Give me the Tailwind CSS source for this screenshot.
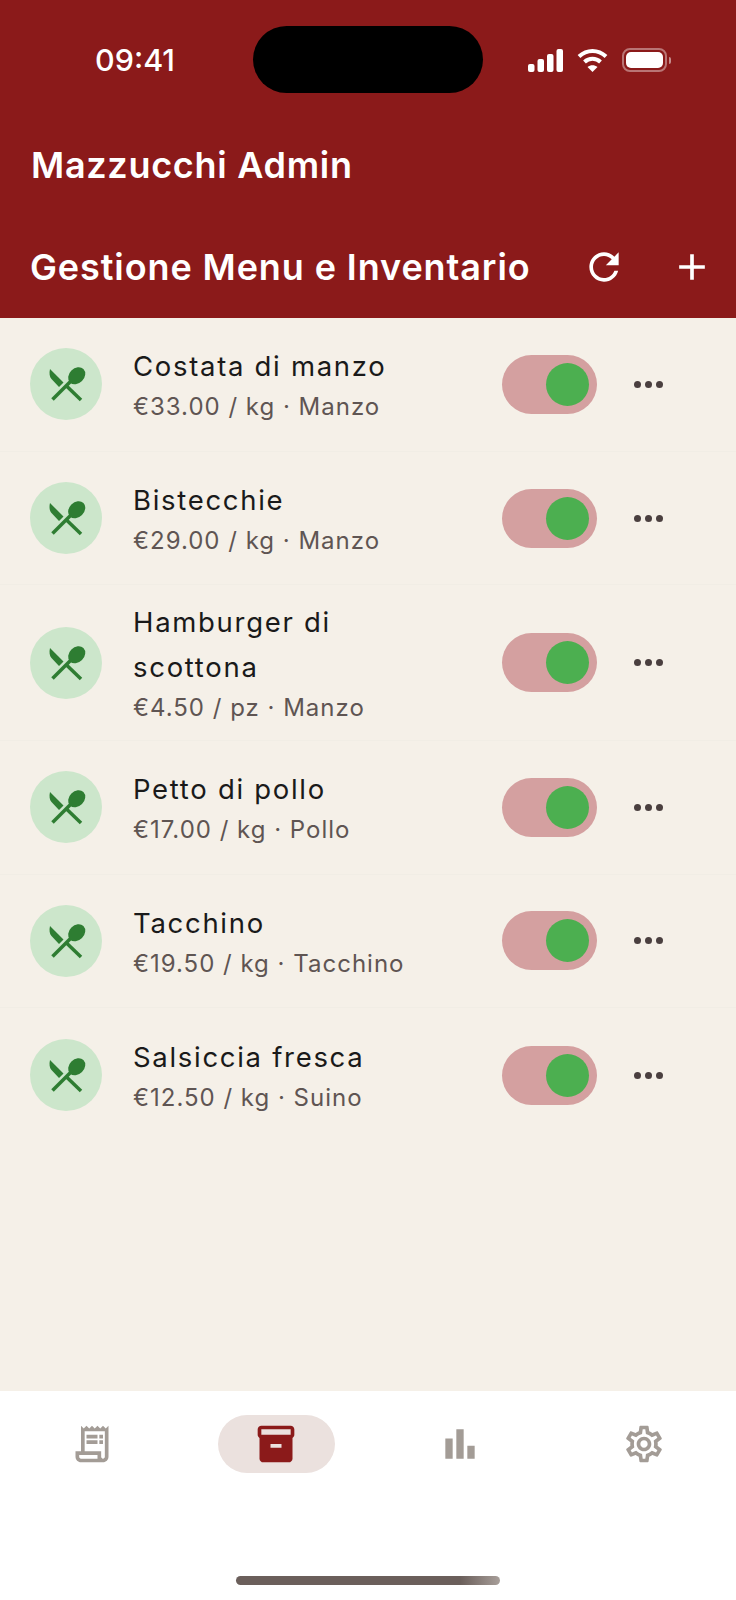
<!DOCTYPE html>
<html lang="it">
<head>
<meta charset="utf-8">
<title>Mazzucchi Admin</title>
<script src="https://cdn.jsdelivr.net/npm/@tailwindcss/browser@4"></script>
</head>
<body class="m-0">
<div class="relative flex h-[1600px] w-[736px] flex-col overflow-hidden bg-[#f5f0e8] font-['Inter',sans-serif]">
  <header class="h-[318px] shrink-0 bg-[#8b1a1a] font-['Inter',sans-serif] text-white">
    <div class="flex h-[120px] items-center justify-between pl-[95px] pr-[65px]">
      <span class="text-[30.500px] font-medium leading-none">09:41</span>
      <div class="flex items-center gap-[14px]">
        <svg width="35" height="23" viewBox="0 0 35 23" fill="#fff"><rect x="0" y="15" width="6.500" height="8" rx="2"/><rect x="9.500" y="10" width="6.500" height="13" rx="2"/><rect x="19" y="5" width="6.500" height="18" rx="2"/><rect x="28.500" y="0" width="6.500" height="23" rx="2"/></svg>
        <svg width="31" height="24" viewBox="0 0 31 24" fill="none" stroke="#fff" stroke-width="4"><path d="M2 8.500C10 1 21 1 29 8.500"/><path d="M7.500 14C12 9.800 19 9.800 23.500 14"/><path d="M15.500 24l-5-5c3-2.400 7-2.400 10 0z" fill="#fff" stroke="none"/></svg>
        <div class="flex items-center gap-[2px]">
          <div class="h-[24px] w-[45px] rounded-[8px] border-2 border-white/40 p-[2px]"><div class="h-full w-full rounded-[5px] bg-white"></div></div>
          <div class="h-[7px] w-[2px] rounded-r bg-white/50"></div>
        </div>
      </div>
    </div>
    <div class="flex h-[90px] items-center pl-[31px] text-[36px] font-semibold leading-none tracking-[0.700px]">Mazzucchi Admin</div>
    <div class="flex h-[108px] items-center justify-between pl-[30px] pr-[22px] pt-[6px]">
      <h1 class="text-[36px] font-semibold leading-none tracking-[0.900px]">Gestione Menu e Inventario</h1>
      <div class="flex items-center gap-[44px]">
        <svg width="44" height="44" viewBox="0 0 24 24" fill="#fff"><path d="M17.650 6.350C16.200 4.900 14.210 4 12 4c-4.420 0-7.990 3.580-7.990 8s3.570 8 7.990 8c3.730 0 6.840-2.550 7.730-6h-2.080c-.82 2.330-3.040 4-5.650 4-3.310 0-6-2.690-6-6s2.690-6 6-6c1.660 0 3.140.69 4.220 1.780L13 11h7V4l-2.350 2.350z"/></svg>
        <svg width="44" height="44" viewBox="0 0 24 24" fill="#fff"><path d="M19 13h-6v6h-2v-6H5v-2h6V5h2v6h6v2z"/></svg>
      </div>
    </div>
  </header>

  <main class="flex-1">
    <div class="flex min-h-[133.700px] items-center border-b border-[#f1ede5] pl-[30px] pr-[73.500px]">
      <div class="flex h-[72px] w-[72px] shrink-0 items-center justify-center rounded-full bg-[#cce6cb]">
        <svg width="72" height="72" viewBox="0 0 72 72" fill="#2e7d32" stroke="#2e7d32"><path stroke="none" d="M20 21L33.500 34.500L29 39L21.500 31C19.500 29 19 25 20 21z"/><line x1="36" y1="37.500" x2="51" y2="52" stroke-width="3.500"/><line x1="41" y1="33" x2="22.500" y2="51.500" stroke-width="3.500"/><ellipse cx="46.700" cy="27.700" rx="9.500" ry="7.500" stroke="none" transform="rotate(-45 46.700 27.700)"/></svg>
      </div>
      <div class="ml-[31px] w-[310px]">
        <div class="text-[27.500px] leading-[45px] tracking-[1.700px] text-[#1a1a1a]">Costata di manzo</div>
        <div class="text-[24px] leading-[35px] tracking-[1px] text-[#5f5553]">€33.00 / kg · Manzo</div>
      </div>
      <div class="ml-auto flex h-[59px] w-[95px] shrink-0 items-center justify-end rounded-full bg-[#d4a0a0] pr-[8px]"><div class="h-[43px] w-[43px] rounded-full bg-[#4caf50]"></div></div>
      <div class="ml-[36.500px] flex gap-[4px]"><span class="h-[7px] w-[7px] rounded-full bg-[#4a3f3f]"></span><span class="h-[7px] w-[7px] rounded-full bg-[#4a3f3f]"></span><span class="h-[7px] w-[7px] rounded-full bg-[#4a3f3f]"></span></div>
    </div>
    <div class="flex min-h-[133.700px] items-center border-b border-[#f1ede5] pl-[30px] pr-[73.500px]">
      <div class="flex h-[72px] w-[72px] shrink-0 items-center justify-center rounded-full bg-[#cce6cb]">
        <svg width="72" height="72" viewBox="0 0 72 72" fill="#2e7d32" stroke="#2e7d32"><path stroke="none" d="M20 21L33.500 34.500L29 39L21.500 31C19.500 29 19 25 20 21z"/><line x1="36" y1="37.500" x2="51" y2="52" stroke-width="3.500"/><line x1="41" y1="33" x2="22.500" y2="51.500" stroke-width="3.500"/><ellipse cx="46.700" cy="27.700" rx="9.500" ry="7.500" stroke="none" transform="rotate(-45 46.700 27.700)"/></svg>
      </div>
      <div class="ml-[31px] w-[310px]">
        <div class="text-[27.500px] leading-[45px] tracking-[1.700px] text-[#1a1a1a]">Bistecchie</div>
        <div class="text-[24px] leading-[35px] tracking-[1px] text-[#5f5553]">€29.00 / kg · Manzo</div>
      </div>
      <div class="ml-auto flex h-[59px] w-[95px] shrink-0 items-center justify-end rounded-full bg-[#d4a0a0] pr-[8px]"><div class="h-[43px] w-[43px] rounded-full bg-[#4caf50]"></div></div>
      <div class="ml-[36.500px] flex gap-[4px]"><span class="h-[7px] w-[7px] rounded-full bg-[#4a3f3f]"></span><span class="h-[7px] w-[7px] rounded-full bg-[#4a3f3f]"></span><span class="h-[7px] w-[7px] rounded-full bg-[#4a3f3f]"></span></div>
    </div>
    <div class="flex min-h-[133.700px] items-center border-b border-[#f1ede5] py-[14.750px] pl-[30px] pr-[73.500px]">
      <div class="flex h-[72px] w-[72px] shrink-0 items-center justify-center rounded-full bg-[#cce6cb]">
        <svg width="72" height="72" viewBox="0 0 72 72" fill="#2e7d32" stroke="#2e7d32"><path stroke="none" d="M20 21L33.500 34.500L29 39L21.500 31C19.500 29 19 25 20 21z"/><line x1="36" y1="37.500" x2="51" y2="52" stroke-width="3.500"/><line x1="41" y1="33" x2="22.500" y2="51.500" stroke-width="3.500"/><ellipse cx="46.700" cy="27.700" rx="9.500" ry="7.500" stroke="none" transform="rotate(-45 46.700 27.700)"/></svg>
      </div>
      <div class="ml-[31px] w-[310px]">
        <div class="text-[27.500px] leading-[45px] tracking-[1.700px] text-[#1a1a1a]">Hamburger di scottona</div>
        <div class="text-[24px] leading-[35px] tracking-[1px] text-[#5f5553]">€4.50 / pz · Manzo</div>
      </div>
      <div class="ml-auto flex h-[59px] w-[95px] shrink-0 items-center justify-end rounded-full bg-[#d4a0a0] pr-[8px]"><div class="h-[43px] w-[43px] rounded-full bg-[#4caf50]"></div></div>
      <div class="ml-[36.500px] flex gap-[4px]"><span class="h-[7px] w-[7px] rounded-full bg-[#4a3f3f]"></span><span class="h-[7px] w-[7px] rounded-full bg-[#4a3f3f]"></span><span class="h-[7px] w-[7px] rounded-full bg-[#4a3f3f]"></span></div>
    </div>
    <div class="flex min-h-[133.700px] items-center border-b border-[#f1ede5] pl-[30px] pr-[73.500px]">
      <div class="flex h-[72px] w-[72px] shrink-0 items-center justify-center rounded-full bg-[#cce6cb]">
        <svg width="72" height="72" viewBox="0 0 72 72" fill="#2e7d32" stroke="#2e7d32"><path stroke="none" d="M20 21L33.500 34.500L29 39L21.500 31C19.500 29 19 25 20 21z"/><line x1="36" y1="37.500" x2="51" y2="52" stroke-width="3.500"/><line x1="41" y1="33" x2="22.500" y2="51.500" stroke-width="3.500"/><ellipse cx="46.700" cy="27.700" rx="9.500" ry="7.500" stroke="none" transform="rotate(-45 46.700 27.700)"/></svg>
      </div>
      <div class="ml-[31px] w-[310px]">
        <div class="text-[27.500px] leading-[45px] tracking-[1.700px] text-[#1a1a1a]">Petto di pollo</div>
        <div class="text-[24px] leading-[35px] tracking-[1px] text-[#5f5553]">€17.00 / kg · Pollo</div>
      </div>
      <div class="ml-auto flex h-[59px] w-[95px] shrink-0 items-center justify-end rounded-full bg-[#d4a0a0] pr-[8px]"><div class="h-[43px] w-[43px] rounded-full bg-[#4caf50]"></div></div>
      <div class="ml-[36.500px] flex gap-[4px]"><span class="h-[7px] w-[7px] rounded-full bg-[#4a3f3f]"></span><span class="h-[7px] w-[7px] rounded-full bg-[#4a3f3f]"></span><span class="h-[7px] w-[7px] rounded-full bg-[#4a3f3f]"></span></div>
    </div>
    <div class="flex min-h-[133.700px] items-center border-b border-[#f1ede5] pl-[30px] pr-[73.500px]">
      <div class="flex h-[72px] w-[72px] shrink-0 items-center justify-center rounded-full bg-[#cce6cb]">
        <svg width="72" height="72" viewBox="0 0 72 72" fill="#2e7d32" stroke="#2e7d32"><path stroke="none" d="M20 21L33.500 34.500L29 39L21.500 31C19.500 29 19 25 20 21z"/><line x1="36" y1="37.500" x2="51" y2="52" stroke-width="3.500"/><line x1="41" y1="33" x2="22.500" y2="51.500" stroke-width="3.500"/><ellipse cx="46.700" cy="27.700" rx="9.500" ry="7.500" stroke="none" transform="rotate(-45 46.700 27.700)"/></svg>
      </div>
      <div class="ml-[31px] w-[310px]">
        <div class="text-[27.500px] leading-[45px] tracking-[1.700px] text-[#1a1a1a]">Tacchino</div>
        <div class="text-[24px] leading-[35px] tracking-[1px] text-[#5f5553]">€19.50 / kg · Tacchino</div>
      </div>
      <div class="ml-auto flex h-[59px] w-[95px] shrink-0 items-center justify-end rounded-full bg-[#d4a0a0] pr-[8px]"><div class="h-[43px] w-[43px] rounded-full bg-[#4caf50]"></div></div>
      <div class="ml-[36.500px] flex gap-[4px]"><span class="h-[7px] w-[7px] rounded-full bg-[#4a3f3f]"></span><span class="h-[7px] w-[7px] rounded-full bg-[#4a3f3f]"></span><span class="h-[7px] w-[7px] rounded-full bg-[#4a3f3f]"></span></div>
    </div>
    <div class="flex min-h-[133.700px] items-center pl-[30px] pr-[73.500px]">
      <div class="flex h-[72px] w-[72px] shrink-0 items-center justify-center rounded-full bg-[#cce6cb]">
        <svg width="72" height="72" viewBox="0 0 72 72" fill="#2e7d32" stroke="#2e7d32"><path stroke="none" d="M20 21L33.500 34.500L29 39L21.500 31C19.500 29 19 25 20 21z"/><line x1="36" y1="37.500" x2="51" y2="52" stroke-width="3.500"/><line x1="41" y1="33" x2="22.500" y2="51.500" stroke-width="3.500"/><ellipse cx="46.700" cy="27.700" rx="9.500" ry="7.500" stroke="none" transform="rotate(-45 46.700 27.700)"/></svg>
      </div>
      <div class="ml-[31px] w-[310px]">
        <div class="text-[27.500px] leading-[45px] tracking-[1.700px] text-[#1a1a1a]">Salsiccia fresca</div>
        <div class="text-[24px] leading-[35px] tracking-[1px] text-[#5f5553]">€12.50 / kg · Suino</div>
      </div>
      <div class="ml-auto flex h-[59px] w-[95px] shrink-0 items-center justify-end rounded-full bg-[#d4a0a0] pr-[8px]"><div class="h-[43px] w-[43px] rounded-full bg-[#4caf50]"></div></div>
      <div class="ml-[36.500px] flex gap-[4px]"><span class="h-[7px] w-[7px] rounded-full bg-[#4a3f3f]"></span><span class="h-[7px] w-[7px] rounded-full bg-[#4a3f3f]"></span><span class="h-[7px] w-[7px] rounded-full bg-[#4a3f3f]"></span></div>
    </div>
  </main>

  <nav class="h-[209px] shrink-0 bg-white pt-[24px]">
    <div class="grid grid-cols-4">
      <div class="flex h-[58px] items-center justify-center">
        <svg width="44" height="44" viewBox="0 0 24 24" fill="#a39c96"><path d="M19.500 3.500L18 2l-1.500 1.500L15 2l-1.500 1.500L12 2l-1.500 1.500L9 2 7.500 3.500 6 2v14H3v3c0 1.660 1.340 3 3 3h12c1.660 0 3-1.340 3-3V2l-1.500 1.500zM15 20H6c-.55 0-1-.45-1-1v-1h10v2zm4-1c0 .55-.45 1-1 1s-1-.45-1-1v-3H8V5h11v14z"/><path d="M9 7h6v2H9zM16 7h2v2h-2zM9 10h6v2H9zM16 10h2v2h-2z"/></svg>
      </div>
      <div class="flex h-[58px] items-center justify-center">
        <div class="flex h-[58px] w-[117px] items-center justify-center rounded-full bg-[#ebe1de]">
          <svg width="44" height="44" viewBox="0 0 24 24" fill="#8b1a1a"><path d="M20 2H4c-1 0-2 .9-2 2v3.010c0 .72.43 1.340 1 1.690V20c0 1.100 1.100 2 2 2h14c.9 0 2-.9 2-2V8.700c.57-.35 1-.97 1-1.690V4c0-1.100-1-2-2-2zm-5 12H9v-2h6v2zm5-7H4V4l16-.02V7z"/></svg>
        </div>
      </div>
      <div class="flex h-[58px] items-center justify-center">
        <svg width="44" height="44" viewBox="0 0 24 24" fill="#a39c96"><path d="M4 9h4v11H4zM16 13h4v7h-4zM10 4h4v16h-4z"/></svg>
      </div>
      <div class="flex h-[58px] items-center justify-center">
        <svg width="44" height="44" viewBox="0 0 24 24" fill="#a39c96"><path d="M19.430 12.980c.04-.32.07-.64.07-.98 0-.34-.03-.66-.07-.98l2.110-1.650c.19-.15.24-.42.12-.64l-2-3.460c-.09-.16-.26-.25-.44-.25-.06 0-.12.01-.17.03l-2.490 1c-.52-.4-1.080-.73-1.690-.98l-.38-2.650C14.460 2.180 14.250 2 14 2h-4c-.25 0-.46.18-.49.42l-.38 2.650c-.61.25-1.170.59-1.690.98l-2.490-1c-.06-.02-.12-.03-.18-.03-.17 0-.34.09-.43.25l-2 3.460c-.13.22-.07.49.12.64l2.110 1.650c-.04.32-.07.65-.07.98 0 .33.03.66.07.98l-2.110 1.650c-.19.15-.24.42-.12.64l2 3.460c.09.16.26.25.44.25.06 0 .12-.01.17-.03l2.490-1c.52.4 1.080.73 1.690.98l.38 2.650c.03.24.24.42.49.42h4c.25 0 .46-.18.49-.42l.38-2.650c.61-.25 1.170-.59 1.690-.98l2.490 1c.06.02.12.03.18.03.17 0 .34-.09.43-.25l2-3.460c.12-.22.07-.49-.12-.64l-2.110-1.650zm-1.980-1.710c.04.31.05.52.05.73 0 .21-.02.43-.05.73l-.14 1.130.89.7 1.080.84-.7 1.210-1.270-.51-1.040-.42-.9.68c-.43.32-.84.56-1.250.73l-1.060.43-.16 1.130-.2 1.350h-1.400l-.19-1.350-.16-1.130-1.060-.43c-.43-.18-.83-.41-1.230-.71l-.91-.7-1.060.43-1.270.51-.7-1.210 1.080-.84.89-.7-.14-1.130c-.03-.31-.05-.54-.05-.74s.02-.43.05-.73l.14-1.130-.89-.7-1.080-.84.7-1.210 1.270.51 1.040.42.9-.68c.43-.32.84-.56 1.250-.73l1.060-.43.16-1.130.2-1.350h1.390l.19 1.350.16 1.130 1.060.43c.43.18.83.41 1.230.71l.91.7 1.060-.43 1.270-.51.7 1.210-1.070.85-.89.7.14 1.130zM12 8c-2.210 0-4 1.790-4 4s1.790 4 4 4 4-1.790 4-4-1.790-4-4-4zm0 6c-1.100 0-2-.9-2-2s.9-2 2-2 2 .9 2 2-.9 2-2 2z"/></svg>
      </div>
    </div>
    <div class="mx-auto mt-[103px] h-[9px] w-[264px] rounded-full bg-gradient-to-r from-[#6b5f5b] from-85% to-[#a89f9a]"></div>
  </nav>

  <div class="absolute left-[253px] top-[26px] h-[67px] w-[230px] rounded-[34px] bg-black"></div>
</div>
</body>
</html>
